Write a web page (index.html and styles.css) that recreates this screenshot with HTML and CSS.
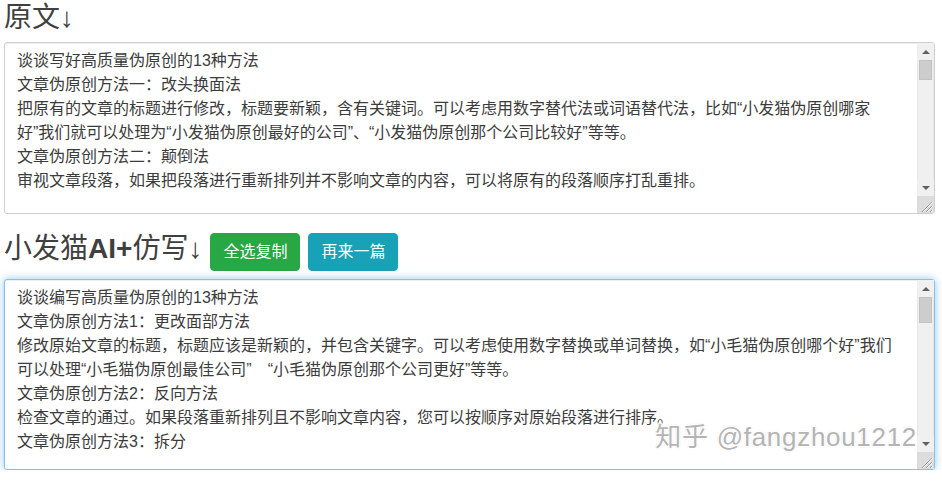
FILE: index.html
```html
<!DOCTYPE html>
<html lang="zh-CN">
<head>
<meta charset="utf-8">
<title>伪原创</title>
<link rel="stylesheet" href="styles.css">
</head>
<body>
<main class="page">
  <h2 class="title first">原文↓</h2>
  <div class="box">
    <div class="text">
      <div class="line">谈谈写好高质量伪原创的13种方法</div>
      <div class="line">文章伪原创方法一：改头换面法</div>
      <div class="line">把原有的文章的标题进行修改，标题要新颖，含有关键词。可以考虑用数字替代法或词语替代法，比如“小发猫伪原创哪家</div>
      <div class="line">好”我们就可以处理为“小发猫伪原创最好的公司”、“小发猫伪原创那个公司比较好”等等。</div>
      <div class="line">文章伪原创方法二：颠倒法</div>
      <div class="line">审视文章段落，如果把段落进行重新排列并不影响文章的内容，可以将原有的段落顺序打乱重排。</div>
    </div>
    <div class="sbar">
      <div class="sbtn"><span class="tri up"></span></div>
      <div class="track"><div class="thumb t1"></div></div>
      <div class="sbtn"><span class="tri down"></span></div>
      <div class="grip">
        <svg width="17" height="17" viewBox="0 0 17 17"><path d="M16 6 L6 16 M16 10 L10 16 M16 14 L14 16" stroke="#fff" stroke-width="1"/><path d="M15 6 L5 16 M15 10 L9 16 M15 14 L13 16" stroke="#9a9a9a" stroke-width="1"/></svg>
      </div>
    </div>
  </div>

  <div class="toolbar">
    <h2 class="title">小发猫<span class="bold">AI+</span>仿写↓</h2>
    <button class="btn green">全选复制</button>
    <button class="btn cyan">再来一篇</button>
  </div>

  <div class="box focus">
    <div class="text">
      <div class="line">谈谈编写高质量伪原创的13种方法</div>
      <div class="line">文章伪原创方法1：更改面部方法</div>
      <div class="line">修改原始文章的标题，标题应该是新颖的，并包含关键字。可以考虑使用数字替换或单词替换，如“小毛猫伪原创哪个好”我们</div>
      <div class="line">可以处理“小毛猫伪原创最佳公司”　“小毛猫伪原创那个公司更好”等等。</div>
      <div class="line">文章伪原创方法2：反向方法</div>
      <div class="line">检查文章的通过。如果段落重新排列且不影响文章内容，您可以按顺序对原始段落进行排序。</div>
      <div class="line">文章伪原创方法3：拆分</div>
    </div>
    <div class="sbar">
      <div class="sbtn"><span class="tri up"></span></div>
      <div class="track"><div class="thumb t2"></div></div>
      <div class="sbtn"><span class="tri down"></span></div>
      <div class="grip">
        <svg width="17" height="17" viewBox="0 0 17 17"><path d="M16 6 L6 16 M16 10 L10 16 M16 14 L14 16" stroke="#fff" stroke-width="1"/><path d="M15 6 L5 16 M15 10 L9 16 M15 14 L13 16" stroke="#9a9a9a" stroke-width="1"/></svg>
      </div>
    </div>
    <div class="watermark">知乎 @fangzhou1212</div>
  </div>
</main>
</body>
</html>
```

FILE: styles.css
```css
html, body {
  margin: 0;
  padding: 0;
  background: #fff;
}

.page {
  width: 931px;
  padding-left: 4px;
  font-family: "Liberation Sans", "Noto Sans CJK SC", sans-serif;
}

.title {
  margin: 0;
  font-size: 28px;
  font-weight: 400;
  line-height: 32px;
  color: #404040;
  white-space: nowrap;
}

.title.first {
  line-height: 36px;
  margin-bottom: 6px;
}

.bold {
  font-weight: 700;
}

.box {
  position: relative;
  display: flex;
  box-sizing: border-box;
  height: 172px;
  border: 1px solid #cfcfcf;
  border-radius: 3px;
  background: #fff;
  box-shadow: inset 0 1px 1px rgba(0, 0, 0, 0.075);
  overflow: hidden;
}

.box.focus {
  height: 191px;
  margin-top: 8px;
  border-color: #86c1ec;
  overflow: visible;
  box-shadow: inset 0 1px 1px rgba(0, 0, 0, 0.075), 0 0 8px rgba(102, 175, 233, 0.7);
}

.text {
  flex: 1;
  padding: 6px 12px;
  overflow: hidden;
  font-size: 16px;
  line-height: 24px;
  color: #3c3c3c;
}

.line {
  white-space: pre;
  height: 24px;
}

.sbar {
  width: 17px;
  display: flex;
  flex-direction: column;
  background: #f0f0f0;
}

.sbtn {
  height: 17px;
  display: flex;
  align-items: center;
  justify-content: center;
  flex: none;
}

.tri {
  width: 0;
  height: 0;
  border-left: 4px solid transparent;
  border-right: 4px solid transparent;
}

.tri.up {
  border-bottom: 4px solid #606060;
}

.tri.down {
  border-top: 4px solid #606060;
}

.track {
  flex: 1;
  border-left: 1px solid #e6e6e6;
  border-right: 1px solid #e6e6e6;
}

.thumb {
  margin: 0 1px;
  background: #cdcdcd;
  border: 1px solid #c2c2c2;
  box-sizing: border-box;
}

.thumb.t1 {
  height: 20px;
}

.thumb.t2 {
  height: 26px;
}

.grip {
  height: 17px;
  flex: none;
  background: #dcdcdc;
}

.grip svg {
  display: block;
}

.toolbar {
  display: flex;
  align-items: flex-start;
  gap: 8px;
  margin-top: 19px;
  height: 38px;
}

.btn {
  box-sizing: border-box;
  height: 38px;
  padding: 6px 12px;
  border: 1px solid transparent;
  border-radius: 4px;
  font-family: "Liberation Sans", "Noto Sans CJK SC", sans-serif;
  font-size: 16px;
  line-height: 24px;
  color: #fff;
  white-space: nowrap;
}

.btn.green {
  background: #28a745;
  border-color: #28a745;
}

.btn.cyan {
  background: #17a2b8;
  border-color: #17a2b8;
}

.watermark {
  position: absolute;
  right: 17px;
  top: 142px;
  font-size: 26px;
  line-height: 30px;
  letter-spacing: 0.7px;
  color: #b4b4b4;
  white-space: nowrap;
  text-shadow: 1px 1px 0 #fff, -1px -1px 0 #fff, 1px -1px 0 #fff, -1px 1px 0 #fff, 0 0 2px #999;
}
```
